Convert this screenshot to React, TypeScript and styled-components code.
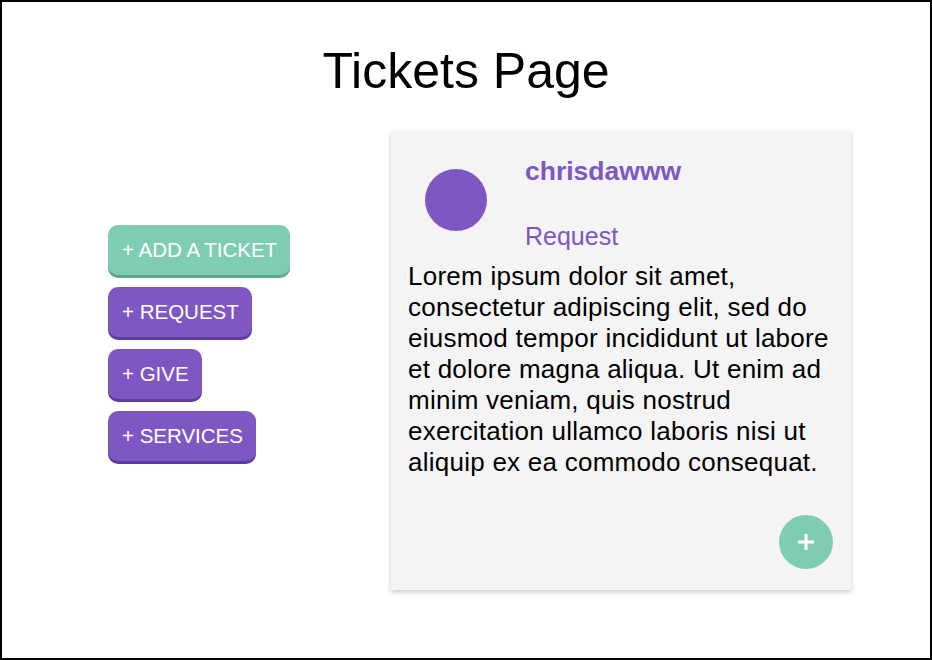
import React from "react";
import styled, { createGlobalStyle } from "styled-components";

const GlobalStyle = createGlobalStyle`
  html, body {
    margin: 0;
    padding: 0;
    background: #fff;
  }
  * {
    box-sizing: border-box;
  }
`;

const Frame = styled.div`
  width: 932px;
  height: 660px;
  border: 2px solid #000;
  background: #fff;
  font-family: "Liberation Sans", Arial, sans-serif;
`;

const Title = styled.h1`
  margin: 0;
  padding-top: 41px;
  font-size: 50px;
  line-height: 56px;
  font-weight: 400;
  text-align: center;
  color: #000;
`;

const Content = styled.div`
  display: flex;
  align-items: flex-start;
  margin-top: 32px;
  padding-left: 106px;
`;

const ActionList = styled.div`
  display: flex;
  flex-direction: column;
  align-items: flex-start;
  gap: 12px;
  margin-top: 94px;
  width: 283px;
`;

const ActionButton = styled.button<{ $variant: "green" | "purple" }>`
  height: 50px;
  padding: 0 13px 0 14px;
  border: none;
  border-radius: 10px;
  background: ${(p) => (p.$variant === "green" ? "#7ecdb3" : "#7e57c2")};
  box-shadow: 0 3px 0
    ${(p) => (p.$variant === "green" ? "#5fa88f" : "#5c3f9c")};
  color: #fff;
  font-family: "Liberation Sans", Arial, sans-serif;
  font-size: 20.5px;
  font-weight: 400;
  text-transform: uppercase;
  cursor: pointer;
`;

const Card = styled.div`
  width: 460px;
  height: 459px;
  display: flex;
  flex-direction: column;
  padding: 26px 17px 17px 17px;
  background: #f4f4f4;
  box-shadow: 0 2px 5px rgba(0, 0, 0, 0.22);
`;

const CardHeader = styled.div`
  display: flex;
  align-items: flex-start;
  padding-left: 17px;
`;

const Avatar = styled.div`
  width: 62px;
  height: 62px;
  margin-top: 12px;
  border-radius: 50%;
  background: #7e57c2;
  flex-shrink: 0;
`;

const Meta = styled.div`
  display: flex;
  flex-direction: column;
  gap: 37px;
  margin-left: 38px;
`;

const UserName = styled.span`
  font-size: 26.5px;
  line-height: 28px;
  font-weight: 700;
  color: #7e57c2;
`;

const TicketType = styled.span`
  font-size: 25px;
  line-height: 28px;
  color: #7e57c2;
`;

const Body = styled.p`
  margin: 11px 0 0 0;
  font-size: 26px;
  letter-spacing: 0.25px;
  line-height: 31px;
  color: #000;
`;

const Fab = styled.button`
  align-self: flex-end;
  margin: auto 1px 4px 0;
  width: 54px;
  height: 54px;
  border: none;
  border-radius: 50%;
  background: #7ecdb3;
  display: flex;
  align-items: center;
  justify-content: center;
  cursor: pointer;
  padding: 0;
`;

const actions: { label: string; variant: "green" | "purple" }[] = [
  { label: "+ Add a ticket", variant: "green" },
  { label: "+ Request", variant: "purple" },
  { label: "+ Give", variant: "purple" },
  { label: "+ Services", variant: "purple" },
];

const App: React.FC = () => {
  return (
    <>
      <GlobalStyle />
      <Frame>
        <Title>Tickets Page</Title>
        <Content>
          <ActionList>
            {actions.map((a) => (
              <ActionButton key={a.label} $variant={a.variant}>
                {a.label}
              </ActionButton>
            ))}
          </ActionList>
          <Card>
            <CardHeader>
              <Avatar />
              <Meta>
                <UserName>chrisdawww</UserName>
                <TicketType>Request</TicketType>
              </Meta>
            </CardHeader>
            <Body>
              Lorem ipsum dolor sit amet, consectetur adipiscing elit, sed do
              eiusmod tempor incididunt ut labore et dolore magna aliqua. Ut
              enim ad minim veniam, quis nostrud exercitation ullamco laboris
              nisi ut aliquip ex ea commodo consequat.
            </Body>
            <Fab aria-label="add">
              <svg width="18" height="18" viewBox="0 0 18 18">
                <path
                  d="M9 1v16M1 9h16"
                  stroke="#fff"
                  strokeWidth="3.2"
                  fill="none"
                />
              </svg>
            </Fab>
          </Card>
        </Content>
      </Frame>
    </>
  );
};

export default App;
